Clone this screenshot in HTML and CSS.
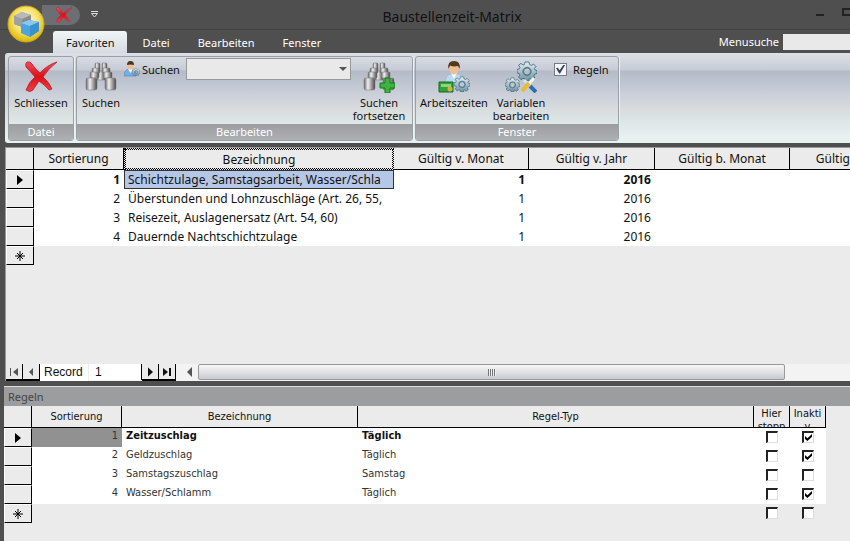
FILE: index.html
```html
<!DOCTYPE html>
<html lang="de">

<head>
    <meta charset="UTF-8">
    <meta name="viewport" content="width=device-width, initial-scale=1.0">
    <title>Baustellenzeit-Matrix</title>
    <link rel="stylesheet" href="styles.css">
</head>

<body>
    <svg class="defs" width="0" height="0" aria-hidden="true">
        <defs>
            <linearGradient id="red" x1="0" y1="0" x2="0" y2="1">
                <stop offset="0" stop-color="#ee5058"/><stop offset=".5" stop-color="#dc1018"/><stop offset="1" stop-color="#ef4048"/>
            </linearGradient>
            <linearGradient id="metal" x1="0" y1="0" x2="1" y2="0">
                <stop offset="0" stop-color="#666"/><stop offset=".35" stop-color="#f0f0f0"/><stop offset="1" stop-color="#484848"/>
            </linearGradient>
            <linearGradient id="steel" x1="0" y1="0" x2="0" y2="1">
                <stop offset="0" stop-color="#e3eff3"/><stop offset="1" stop-color="#6793a6"/>
            </linearGradient>
            <radialGradient id="gold" cx=".5" cy=".4" r=".6">
                <stop offset="0" stop-color="#fffde0"/><stop offset=".55" stop-color="#f6e470"/><stop offset="1" stop-color="#dcb400"/>
            </radialGradient>
            <symbol id="cross" viewBox="0 0 32 32">
                <path d="M2 1 Q5 0 7 3 Q11 9 15 12 Q22 4 32 1 Q23 8 18 16 Q24 21 27 28 L24 29 Q20 24 14 20 Q10 26 8 29 Q5 32 1 29 Q4 21 10 16 Q5 10 1 6 Q0 2 2 1Z" fill="url(#red)" stroke="#b90e16" stroke-width=".7"/>
            </symbol>
            <symbol id="binoculars" viewBox="0 0 32 32">
                <g fill="url(#metal)" stroke="#777" stroke-width=".5">
                    <rect x="12" y="10" width="8" height="9"/>
                    <rect x="10" y="2" width="5" height="7" rx="1"/>
                    <rect x="17" y="2" width="5" height="7" rx="1"/>
                    <rect x="7" y="7" width="8" height="5" rx="1"/>
                    <rect x="17" y="7" width="8" height="5" rx="1"/>
                    <rect x="5" y="11" width="9" height="6" rx="1"/>
                    <rect x="18" y="11" width="9" height="6" rx="1"/>
                    <rect x="1" y="17" width="11" height="12" rx="2"/>
                    <rect x="20" y="17" width="11" height="12" rx="2"/>
                </g>
            </symbol>
            <symbol id="gear" viewBox="0 0 20 20">
                <path fill-rule="evenodd" d="M8 1H12L12.5 3.5L14.5 4.4L16.5 3L19 5.7L17.4 7.6L18 9L20 9.5V12.5L17.8 13L16.8 14.8L17.8 17L15 19L13 17.5L12 18V20H8V18L6 17.3L4 18.7L1.5 16L3 14L2.2 12.5L0 12V8.5L2.2 8L3 6.4L1.6 4.2L4 2.4L6 4L7.5 3.4ZM10 7A3.4 3.4 0 1 0 10 14A3.4 3.4 0 1 0 10 7Z" fill="url(#steel)" stroke="#3f6271" stroke-width=".8"/>
                <circle cx="10" cy="10.5" r="4.2" fill="none" stroke="#547686" stroke-width="1"/>
            </symbol>
            <symbol id="person" viewBox="0 0 20 22">
                <path d="M1 22 Q1 14 7 13 H13 Q19 14 19 22Z" fill="#bcd9f4" stroke="#88b4dc" stroke-width=".6"/>
                <path d="M7 12 H13 L10 18Z" fill="#f4fafc"/>
                <ellipse cx="10" cy="7.5" rx="4.8" ry="6" fill="#f1bd94"/>
                <path d="M4.5 8 Q3 0 10 0 Q17 0 15.5 8 L14 5 Q9 6 6 4.5Z" fill="#503b20"/>
            </symbol>
            <symbol id="next" viewBox="0 0 16 16"><path d="M6 3.500V12.500L11 8Z" fill="currentColor"/></symbol>
            <symbol id="last" viewBox="0 0 16 16"><path d="M4 4V12L9 8ZM10 4H12V12H10Z" fill="currentColor"/></symbol>
            <symbol id="prev" viewBox="0 0 16 16"><path d="M10 4V12L6 8Z" fill="currentColor"/></symbol>
            <symbol id="first" viewBox="0 0 16 16"><path d="M12 4V12L7 8ZM4 4H5V12H4Z" fill="currentColor"/></symbol>
            <symbol id="current-row" viewBox="0 0 16 16"><path d="M5 3V13L11 8Z"/></symbol>
            <symbol id="new-row" viewBox="0 0 16 16"><path d="M8 3V13M3 8H13M5 5L11 11M11 5L5 11" stroke="#000" fill="none"/></symbol>
        </defs>
    </svg>

    <header class="titlebar">
        <button class="orb" aria-label="Menü">
            <svg width="38" height="38" viewBox="0 0 38 38">
                <circle cx="19" cy="19" r="18" fill="url(#gold)" stroke="#c8a820"/>
                <path d="M7 11L15 7L24 10V18L15 22L7 19Z" fill="#8b8b8b"/>
                <path d="M7 11L15 7L24 10L15 14Z" fill="#b9b9b9"/>
                <path d="M7 11L15 14V22L7 19Z" fill="#a0a0a0"/>
                <path d="M14 18L22 15L32 17V26L23 32L14 28Z" fill="#4ba4de"/>
                <path d="M14 18L22 15L32 17L23 21Z" fill="#86c8ef"/>
                <path d="M23 21L32 17V26L23 32Z" fill="#3b90cf"/>
            </svg>
        </button>
        <div class="quick-access">
            <button class="quick-close" aria-label="Schliessen"><svg width="18" height="16"><use href="#cross"/></svg></button>
        </div>
        <button class="quick-more" aria-label="Anpassen">
            <svg width="7" height="7" viewBox="0 0 7 7"><path d="M0 .5H7M.5 2.500H6.500L3.500 6Z" stroke="#ddd" fill="none"/></svg>
        </button>
        <h1>Baustellenzeit-Matrix</h1>
        <div class="window-buttons">
            <button aria-label="Minimieren"><svg width="9" height="10"><path d="M0 8H8V10H0Z" fill="#222"/></svg></button>
            <button aria-label="Maximieren"><svg width="11" height="10"><path d="M1 3H10V9H1Z" stroke="#222" stroke-width="2" fill="none"/></svg></button>
        </div>
    </header>

    <nav class="tabs">
        <button class="tab active">Favoriten</button>
        <button class="tab">Datei</button>
        <button class="tab">Bearbeiten</button>
        <button class="tab">Fenster</button>
        <div class="menu-search">
            <label for="menusuche">Menusuche</label>
            <input type="text" id="menusuche">
        </div>
    </nav>

    <section class="ribbon">
        <div class="group">
            <div class="group-body">
                <button class="tool wide"><svg width="32" height="32"><use href="#cross"/></svg>Schliessen</button>
            </div>
            <div class="group-label">Datei</div>
        </div>
        <div class="group search-group">
            <div class="group-body">
                <button class="tool"><svg width="32" height="32"><use href="#binoculars"/></svg>Suchen</button>
                <label class="find" for="suchen">
                    <svg width="16" height="16" viewBox="0 0 16 16">
                        <path d="M0 15Q0 9 5 8H8Q12 9 12 15Z" fill="#76aee6" stroke="#4b82bd" stroke-width=".6"/>
                        <path d="M4 8H9L6.500 12Z" fill="#eef6fc"/>
                        <ellipse cx="6.500" cy="4.500" rx="3" ry="4" fill="#f2bd90"/>
                        <path d="M3 4Q3 0 6.500 0Q10 0 10 4Q6 3 3 4Z" fill="#473621"/>
                        <use href="#gear" x="8" y="7" width="8" height="8"/>
                    </svg>
                    Suchen
                </label>
                <div class="combo">
                    <select id="suchen"><option></option></select>
                </div>
                <button class="tool">
                    <svg width="32" height="32" viewBox="0 0 32 32">
                        <use href="#binoculars"/>
                        <path d="M22 17H27V22H32V27H27V32H22V27H17V22H22Z" fill="#3bb53b" stroke="#147a20"/>
                    </svg>
                    Suchen<br>fortsetzen
                </button>
            </div>
            <div class="group-label">Bearbeiten</div>
        </div>
        <div class="group window-group">
            <div class="group-body">
                <button class="tool times">
                    <svg width="32" height="32" viewBox="0 0 32 32">
                        <use href="#person" x="6" y="0" width="20" height="22"/>
                        <path d="M1 21H15V31H1Z" fill="#35a13b" stroke="#13681e"/>
                        <path d="M3 23H13V26H3Z" fill="#8fd580"/>
                        <circle cx="12" cy="28" r="2.500" fill="#d5b23d"/>
                        <use href="#gear" x="16" y="15" width="16" height="16"/>
                    </svg>
                    Arbeitszeiten
                </button>
                <button class="tool variables">
                    <svg width="32" height="32" viewBox="0 0 32 32">
                        <use href="#gear" x="12" y="0" width="20" height="20"/>
                        <use href="#gear" x="0" y="16" width="15" height="15"/>
                        <path d="M19 19L30 29" stroke="#d8e4ea" stroke-width="3"/>
                        <path d="M25 25L31 31" stroke="#2f6fae" stroke-width="4"/>
                        <path d="M29 17L23 24" stroke="#f2f2f2" stroke-width="3"/>
                        <path d="M24 22L17 30" stroke="#edbb28" stroke-width="4"/>
                    </svg>
                    Variablen<br>bearbeiten
                </button>
                <label class="option"><input type="checkbox" class="ribbon-check" checked>Regeln</label>
            </div>
            <div class="group-label">Fenster</div>
        </div>
    </section>

    <main class="matrix">
        <div class="matrix-grid">
            <table>
                <colgroup>
                    <col class="c-select"><col class="c-sort"><col class="c-name"><col class="c-month"><col class="c-year"><col class="c-month"><col class="c-year">
                </colgroup>
                <thead>
                    <tr><th></th><th>Sortierung</th><th class="focus">Bezeichnung</th><th>Gültig v. Monat</th><th>Gültig v. Jahr</th><th>Gültig b. Monat</th><th>Gültig b. Jahr</th></tr>
                </thead>
                <tbody>
                    <tr class="current"><th><svg width="16" height="16"><use href="#current-row"/></svg></th><td class="num">1</td><td class="selected">Schichtzulage, Samstagsarbeit, Wasser/Schla</td><td class="num">1</td><td class="num">2016</td><td></td><td></td></tr>
                    <tr><th></th><td class="num">2</td><td>Überstunden und Lohnzuschläge (Art. 26, 55,</td><td class="num">1</td><td class="num">2016</td><td></td><td></td></tr>
                    <tr><th></th><td class="num">3</td><td>Reisezeit, Auslagenersatz (Art. 54, 60)</td><td class="num">1</td><td class="num">2016</td><td></td><td></td></tr>
                    <tr><th></th><td class="num">4</td><td>Dauernde Nachtschichtzulage</td><td class="num">1</td><td class="num">2016</td><td></td><td></td></tr>
                    <tr class="new"><th><svg width="16" height="16"><use href="#new-row"/></svg></th><td colspan="6"></td></tr>
                </tbody>
            </table>
        </div>
        <div class="record-bar">
            <button class="step off" aria-label="Erster"><svg width="16" height="16"><use href="#first"/></svg></button>
            <button class="step off" aria-label="Zurück"><svg width="16" height="16"><use href="#prev"/></svg></button>
            <label for="record">Record</label>
            <input type="text" id="record" value="1">
            <button class="step" aria-label="Weiter"><svg width="16" height="16"><use href="#next"/></svg></button>
            <button class="step" aria-label="Letzter"><svg width="16" height="16"><use href="#last"/></svg></button>
            <div class="scrollbar">
                <svg width="16" height="16" viewBox="0 0 16 16"><path d="M10 3V13L5 8Z" fill="#555"/></svg>
                <div class="thumb"><span class="grip"></span></div>
            </div>
        </div>
    </main>

    <section class="rules">
        <h2>Regeln</h2>
        <table>
            <colgroup>
                <col class="c-select"><col class="c-sort"><col class="r-name"><col class="r-type"><col class="r-flag"><col class="r-flag">
            </colgroup>
            <thead>
                <tr><th></th><th>Sortierung</th><th>Bezeichnung</th><th>Regel-Typ</th><th><div class="clip">Hier<br>stopp</div></th><th><div class="clip">Inakti<br>v</div></th></tr>
            </thead>
            <tbody>
                <tr class="current"><th><svg width="16" height="16"><use href="#current-row"/></svg></th><td class="num marked">1</td><td>Zeitzuschlag</td><td>Täglich</td><td class="flag"><input type="checkbox" aria-label="Hier stoppen"></td><td class="flag"><input type="checkbox" aria-label="Inaktiv" checked></td></tr>
                <tr><th></th><td class="num">2</td><td>Geldzuschlag</td><td>Täglich</td><td class="flag"><input type="checkbox" aria-label="Hier stoppen"></td><td class="flag"><input type="checkbox" aria-label="Inaktiv" checked></td></tr>
                <tr><th></th><td class="num">3</td><td>Samstagszuschlag</td><td>Samstag</td><td class="flag"><input type="checkbox" aria-label="Hier stoppen"></td><td class="flag"><input type="checkbox" aria-label="Inaktiv"></td></tr>
                <tr><th></th><td class="num">4</td><td>Wasser/Schlamm</td><td>Täglich</td><td class="flag"><input type="checkbox" aria-label="Hier stoppen"></td><td class="flag"><input type="checkbox" aria-label="Inaktiv" checked></td></tr>
                <tr class="new"><th><svg width="16" height="16"><use href="#new-row"/></svg></th><td></td><td></td><td></td><td class="flag"><input type="checkbox" aria-label="Hier stoppen"></td><td class="flag"><input type="checkbox" aria-label="Inaktiv"></td></tr>
            </tbody>
        </table>
    </section>
</body>

</html>
```
FILE: styles.css
```css
* {
    box-sizing: border-box;
}

body {
    margin: 0;
    min-height: 100vh;
    display: flex;
    flex-direction: column;
    overflow-x: hidden;
    background-color: #4f4f4f;
    font-family: "Noto Sans", sans-serif;
    font-size: 11px;
    color: #111;
}

button,
input,
select {
    font: inherit;
    color: inherit;
    margin: 0;
}

button {
    padding: 0;
    border: 0;
    background: none;
}

svg {
    display: block;
}

.defs {
    position: absolute;
}

/* title bar */
.titlebar {
    position: relative;
    height: 30px;
    display: flex;
    align-items: center;
    padding-left: 42px;
    border-bottom: 1px solid #424242;
}

.orb {
    position: absolute;
    left: 7px;
    top: 5px;
    z-index: 1;
}

.quick-access {
    width: 38px;
    height: 20px;
    display: flex;
    align-items: center;
    justify-content: flex-end;
    padding-right: 7px;
    border-radius: 0 10px 10px 0;
    background-color: #6b6e73;
}

.quick-more {
    margin-left: 11px;
}

h1 {
    flex: 1;
    margin: 4px 0 0;
    padding-right: 10px;
    text-align: center;
    font-size: 14px;
    line-height: 20px;
    font-weight: normal;
    color: #111;
}

.window-buttons {
    display: flex;
    gap: 17px;
    width: 34px;
    padding-bottom: 8px;
}

/* tabs */
.tabs {
    height: 23px;
    display: flex;
    align-items: flex-end;
    gap: 2px;
    padding-left: 53px;
    color: #fff;
}

.tab {
    height: 22px;
    padding: 0 13px;
}

.tab.active {
    color: #111;
    border-radius: 3px 3px 0 0;
    background: linear-gradient(#f0f6f6, #d6dae2);
}

.menu-search {
    display: flex;
    align-items: center;
    gap: 4px;
    margin-left: auto;
    align-self: center;
}

.menu-search input {
    width: 67px;
    height: 16px;
    border: 0;
    background-color: #e9e9e9;
    color: #111;
}

/* ribbon */
.ribbon {
    display: flex;
    gap: 2px;
    height: 90px;
    margin-left: 5px;
    padding: 3px 3px 2px;
    border-radius: 3px 0 0 3px;
    background: linear-gradient(#dde0e6, #c6cbd6 17px, #b4bbc7 18px, #cbd0da 42px, #d8dcdd 56px, #e6f1f0 84px, #e6f1f0);
}

.group {
    display: flex;
    flex-direction: column;
    border: 1px solid #9b9fa6;
    border-radius: 3px;
    overflow: hidden;
    box-shadow: 1px 0 0 #eef1f4;
}

.group-body {
    flex: 1;
    display: flex;
    align-items: flex-start;
}

.group-label {
    height: 16px;
    line-height: 16px;
    text-align: center;
    color: #fff;
    background: linear-gradient(#9b9da0, #aeb0b2);
}

.search-group {
    width: 337px;
}

.search-group .group-body {
    padding-left: 3px;
}

.window-group {
    width: 204px;
}

.tool {
    display: flex;
    flex-direction: column;
    align-items: center;
    width: 42px;
    padding-top: 4px;
    line-height: 13px;
}

.tool.wide {
    width: 64px;
}

.tool.times {
    width: 76px;
}

.tool.variables {
    width: 58px;
}

.tool svg {
    margin-bottom: 3px;
}

.find {
    display: flex;
    align-items: center;
    gap: 2px;
    height: 24px;
    width: 64px;
    padding-left: 2px;
}

.combo {
    position: relative;
    width: 165px;
    height: 22px;
    margin-top: 1px;
}

.combo select {
    appearance: none;
    width: 100%;
    height: 100%;
    border: 1px solid #999;
    border-radius: 0;
    background-color: #e9e9e9;
}

.combo::after {
    content: "";
    position: absolute;
    right: 4px;
    top: 9px;
    border: 4px solid transparent;
    border-top-color: #555;
    border-bottom: 0;
}

.combo + .tool {
    width: 56px;
}

.option {
    display: flex;
    align-items: center;
    gap: 6px;
    height: 24px;
    padding-left: 4px;
}

.ribbon-check {
    appearance: none;
    width: 13px;
    height: 13px;
    border: 1px solid #777c85;
    background-color: #f4f5f7;
}

input[type="checkbox"]:checked::after {
    content: "";
    display: block;
    width: 9px;
    height: 9px;
    margin: 1px;
    background-color: #33415e;
    clip-path: polygon(0 40%, 20% 35%, 40% 65%, 85% 0, 100% 8%, 45% 100%, 35% 100%);
}

/* data grids */
.matrix {
    flex: 1;
    display: flex;
    flex-direction: column;
    margin: 4px 0 0 5px;
    border-left: 1px solid #999;
    border-top: 1px solid #999;
    background-color: #ebebeb;
    font-size: 12px;
}

.matrix-grid {
    flex: 1;
    overflow: hidden;
}

table {
    table-layout: fixed;
    width: 0;
    border-spacing: 0;
}

th,
td {
    height: 19px;
    padding: 0 4px;
    line-height: 17px;
    white-space: nowrap;
    overflow: hidden;
    text-align: left;
}

th {
    padding: 0;
    border-right: 1px solid #000;
    border-bottom: 1px solid #000;
    background-color: #ebebeb;
    text-align: center;
    font-weight: normal;
}

thead th {
    height: 22px;
}

tbody th {
    border-left: 1px solid #fff;
    border-top: 1px solid #fff;
}

tbody th svg {
    margin: 0 auto;
}

td {
    background-color: #fff;
}

.new td {
    background-color: #ebebeb;
}

.current td {
    font-weight: bold;
}

.num {
    text-align: right;
}

.c-select {
    width: 28px;
}

.c-sort {
    width: 90px;
}

.c-name {
    width: 270px;
}

.c-month {
    width: 135px;
}

.c-year {
    width: 126px;
}

th.focus {
    border: 1px dotted #000;
    outline: 1px dotted #000;
    outline-offset: -2px;
}

.current td.selected {
    padding: 0 3px;
    border: 1px solid #333;
    background-color: #b5c7e7;
    font-weight: normal;
}

/* record navigation */
.record-bar {
    display: flex;
    height: 17px;
    font-family: "Liberation Sans", Arial, sans-serif;
    font-size: 12px;
    line-height: 16px;
    background-color: #f3f3f3;
}

.step {
    width: 17px;
    border: 1px solid #000;
    border-width: 0 1px 2px 0;
    background-color: #ebebeb;
    overflow: hidden;
}

.step.off {
    color: #555;
}

.record-bar label {
    width: 49px;
    padding-left: 4px;
    background-color: #fff;
    border-right: 1px solid #eee;
}

.record-bar input {
    width: 53px;
    height: 16px;
    padding: 0 6px;
    border: 0;
    border-right: 1px solid #000;
    background-color: #fff;
}

.scrollbar {
    flex: 1;
    display: flex;
    padding-left: 6px;
}

.thumb {
    flex: 1;
    display: flex;
    align-items: center;
    justify-content: center;
    height: 16px;
    margin-right: 65px;
    border: 1px solid #999;
    border-radius: 2px;
    background: linear-gradient(#f6f6f6, #e2e2e4 50%, #c8cacd);
}

.grip {
    width: 8px;
    height: 7px;
    background: repeating-linear-gradient(90deg, #777 0 1px, #eee 1px 2px);
}

/* rules pane */
.rules {
    margin: 5px 0 0 4px;
    padding-bottom: 18px;
    border-top: 1px solid #ddd;
    background-color: #ebebeb;
}

h2 {
    margin: 0;
    padding-left: 4px;
    font-size: 11px;
    line-height: 19px;
    font-weight: normal;
    color: #444;
    background-color: #9c9d9e;
}

.rules table {
    font-family: "DejaVu Sans Condensed", "DejaVu Sans", sans-serif;
    font-size: 11px;
}

.rules td {
    line-height: 15px;
    vertical-align: top;
    color: #333;
}

.rules .current td {
    color: #111;
}

.rules .current td.marked {
    font-weight: normal;
    color: #333;
    background-color: #919191;
}

.r-name {
    width: 236px;
}

.r-type {
    width: 396px;
}

.r-flag {
    width: 36px;
}

.clip {
    height: 20px;
    line-height: 13px;
    overflow: hidden;
}

td.flag {
    padding: 3px 0 0;
}

.flag input {
    appearance: none;
    display: block;
    width: 12px;
    height: 12px;
    margin: 0 auto;
    border: 1px solid #ddd;
    border-top: 2px solid #222;
    border-left: 2px solid #222;
    background-color: #fff;
}

.flag input:checked::after {
    width: 7px;
    height: 7px;
    background-color: #000;
    clip-path: polygon(0 30%, 35% 60%, 100% 0, 100% 40%, 35% 100%, 0 70%);
}
```
